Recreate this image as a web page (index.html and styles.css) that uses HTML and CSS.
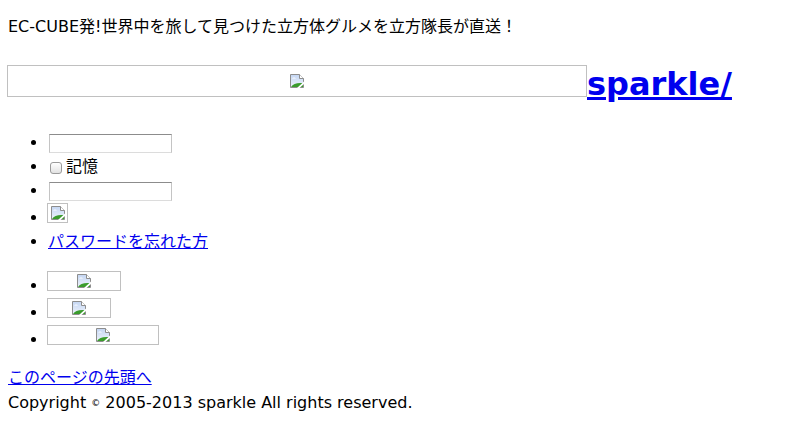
FILE: index.html
```html
<!DOCTYPE html>
<html lang="ja">
<head>
<meta charset="utf-8">
<title>sparkle</title>
<link rel="stylesheet" href="styles.css">
</head>
<body>
<div class="page">
  <p class="catch">EC-CUBE発!世界中を旅して見つけた立方体グルメを立方隊長が直送！</p>
  <h1 class="logo"><a href="#"><span class="broken broken-logo"><svg viewBox="0 0 16 16" width="16" height="16" aria-hidden="true"><defs><linearGradient id="sky1" x1="0" y1="0" x2="0" y2="1"><stop offset="0" stop-color="#c4d6f3"/><stop offset="1" stop-color="#eef3fb"/></linearGradient></defs><path d="M1.5 1.5h9l4 4v9h-13z" fill="url(#sky1)" stroke="#8d8d8d"/><path d="M10.5 1.5v4h4" fill="#fff" stroke="#8d8d8d"/><path d="M3 5.5c1-1.5 3-1.5 4 0z" fill="#fff"/><path d="M2 14 C4 10.5 8 9.5 14 10 V14 z" fill="#3a9c2c"/><path d="M8 15 L15 8.5 V11 L10.5 15z" fill="#fff"/></svg></span>sparkle/</a></h1>
  <ul class="login">
    <li><input type="text" class="field"></li>
    <li><input type="checkbox" class="check" id="remember"><label for="remember">記憶</label></li>
    <li><input type="password" class="field"></li>
    <li><span class="broken broken-btn"><svg viewBox="0 0 16 16" width="16" height="16" aria-hidden="true"><defs><linearGradient id="sky2" x1="0" y1="0" x2="0" y2="1"><stop offset="0" stop-color="#c4d6f3"/><stop offset="1" stop-color="#eef3fb"/></linearGradient></defs><path d="M1.5 1.5h9l4 4v9h-13z" fill="url(#sky2)" stroke="#8d8d8d"/><path d="M10.5 1.5v4h4" fill="#fff" stroke="#8d8d8d"/><path d="M3 5.5c1-1.5 3-1.5 4 0z" fill="#fff"/><path d="M2 14 C4 10.5 8 9.5 14 10 V14 z" fill="#3a9c2c"/><path d="M8 15 L15 8.5 V11 L10.5 15z" fill="#fff"/></svg></span></li>
    <li><a href="#">パスワードを忘れた方</a></li>
  </ul>
  <ul class="banners">
    <li><span class="broken banner-a"><svg viewBox="0 0 16 16" width="16" height="16" aria-hidden="true"><defs><linearGradient id="sky3" x1="0" y1="0" x2="0" y2="1"><stop offset="0" stop-color="#c4d6f3"/><stop offset="1" stop-color="#eef3fb"/></linearGradient></defs><path d="M1.5 1.5h9l4 4v9h-13z" fill="url(#sky3)" stroke="#8d8d8d"/><path d="M10.5 1.5v4h4" fill="#fff" stroke="#8d8d8d"/><path d="M3 5.5c1-1.5 3-1.5 4 0z" fill="#fff"/><path d="M2 14 C4 10.5 8 9.5 14 10 V14 z" fill="#3a9c2c"/><path d="M8 15 L15 8.5 V11 L10.5 15z" fill="#fff"/></svg></span></li>
    <li><span class="broken banner-b"><svg viewBox="0 0 16 16" width="16" height="16" aria-hidden="true"><defs><linearGradient id="sky4" x1="0" y1="0" x2="0" y2="1"><stop offset="0" stop-color="#c4d6f3"/><stop offset="1" stop-color="#eef3fb"/></linearGradient></defs><path d="M1.5 1.5h9l4 4v9h-13z" fill="url(#sky4)" stroke="#8d8d8d"/><path d="M10.5 1.5v4h4" fill="#fff" stroke="#8d8d8d"/><path d="M3 5.5c1-1.5 3-1.5 4 0z" fill="#fff"/><path d="M2 14 C4 10.5 8 9.5 14 10 V14 z" fill="#3a9c2c"/><path d="M8 15 L15 8.5 V11 L10.5 15z" fill="#fff"/></svg></span></li>
    <li><span class="broken banner-c"><svg viewBox="0 0 16 16" width="16" height="16" aria-hidden="true"><defs><linearGradient id="sky5" x1="0" y1="0" x2="0" y2="1"><stop offset="0" stop-color="#c4d6f3"/><stop offset="1" stop-color="#eef3fb"/></linearGradient></defs><path d="M1.5 1.5h9l4 4v9h-13z" fill="url(#sky5)" stroke="#8d8d8d"/><path d="M10.5 1.5v4h4" fill="#fff" stroke="#8d8d8d"/><path d="M3 5.5c1-1.5 3-1.5 4 0z" fill="#fff"/><path d="M2 14 C4 10.5 8 9.5 14 10 V14 z" fill="#3a9c2c"/><path d="M8 15 L15 8.5 V11 L10.5 15z" fill="#fff"/></svg></span></li>
  </ul>
  <div class="footer">
    <p class="totop"><a href="#">このページの先頭へ</a></p>
    <p class="copyright">Copyright <span class="copy">©</span> 2005-2013 sparkle All rights reserved.</p>
  </div>
</div>
</body>
</html>
```

FILE: styles.css
```css
body {
  margin: 0;
  font-family: "DejaVu Sans", "Noto Sans CJK JP", sans-serif;
  font-size: 16px;
  color: #000;
  background: #fff;
}

a {
  color: #0000ee;
}

.page {
  padding: 0 8px;
}

.catch {
  margin: 0;
  padding-top: 17px;
  line-height: 20px;
}

.logo {
  margin: 28px 0 0;
  font-size: 32px;
  font-weight: bold;
  line-height: 36px;
}

.broken {
  display: inline-block;
  box-sizing: border-box;
  height: 20px;
  border: 1px solid #c0c0c0;
  overflow: hidden;
  vertical-align: baseline;
}

.broken svg {
  display: block;
  width: 16px;
  height: 16px;
  margin: 1px auto 0;
}

.broken-logo {
  width: 580px;
  height: 32px;
  margin-left: -1px;
  vertical-align: -2px;
}

.broken-logo svg {
  margin-top: 7px;
}

ul {
  margin: 0;
  padding-left: 40px;
}

.login {
  margin-top: 28.5px;
}

.login li {
  line-height: 24px;
}

.field {
  box-sizing: border-box;
  width: 123px;
  height: 19px;
  margin: 0 0 0 1px;
  padding: 1px 2px;
  border: 1px solid;
  border-color: #8c8c8c #c4c4c4 #dcdcdc #c4c4c4;
  background: #fff;
  font: 13px "DejaVu Sans", sans-serif;
  vertical-align: middle;
}

.check {
  -webkit-appearance: none;
  appearance: none;
  box-sizing: border-box;
  width: 12px;
  height: 12px;
  margin: 0 4px 0 2px;
  border: 1px solid #9a9a9a;
  border-radius: 3px;
  background: linear-gradient(#ffffff, #e2e2e2);
  vertical-align: -2px;
}

.broken-btn {
  width: 21px;
  margin-left: -1px;
}

.banners {
  margin-top: 17px;
}

.banners li {
  line-height: 25px;
}

.banner-a {
  width: 74px;
  margin-left: -1px;
}

.banner-b {
  width: 64px;
  margin-left: -1px;
}

.banner-c {
  width: 112px;
  margin-left: -1px;
}

.footer {
  margin-top: 15px;
}

.totop {
  margin: 0;
  line-height: 22px;
}

.copyright {
  margin: 4px 0 0;
  line-height: 20px;
}

.copy {
  font-size: 9px;
  vertical-align: 2px;
}
```
